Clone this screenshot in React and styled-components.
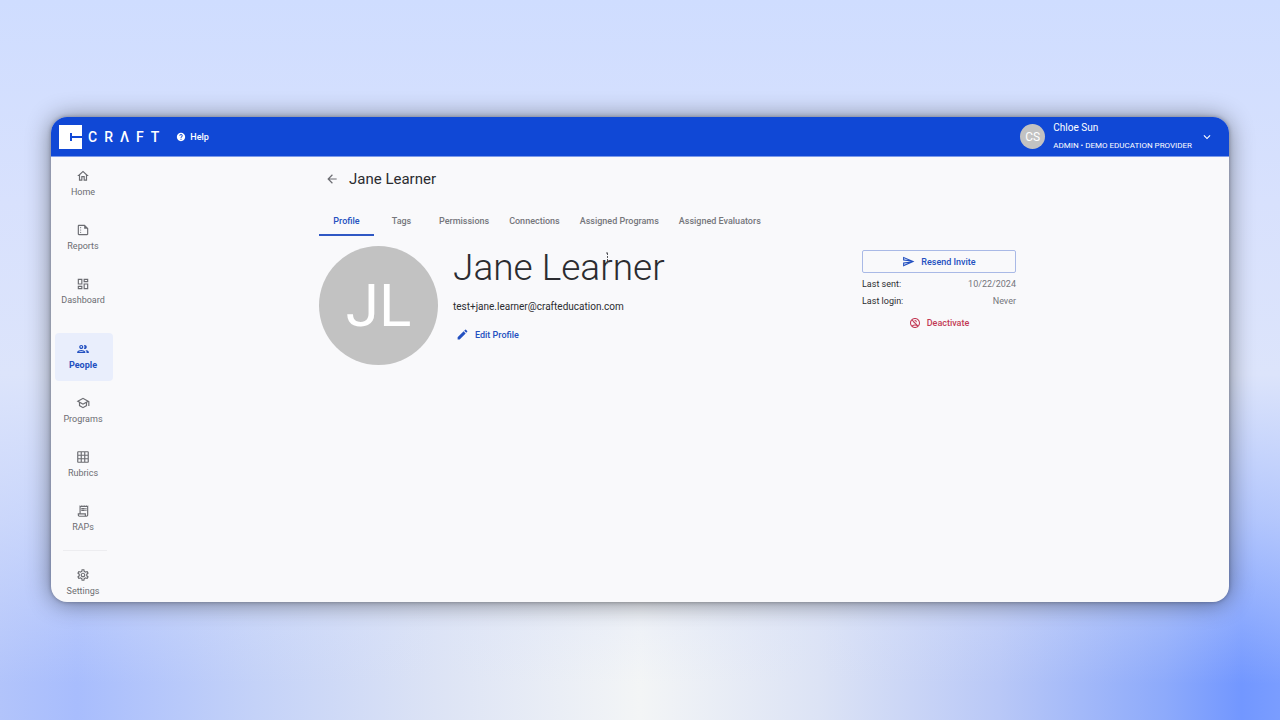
import React, {useState} from "react";
import styled, {createGlobalStyle} from "styled-components";
import {
    MdArrowBack, MdEdit, MdExpandMore, MdHelp, MdOutlineDashboard, MdOutlineGridOn,
    MdOutlineHome, MdOutlineNoAccounts, MdOutlinePeople, MdOutlineReceiptLong,
    MdOutlineSchool, MdOutlineSend, MdOutlineSettings, MdOutlineSummarize
} from "react-icons/md";

const GlobalStyle = createGlobalStyle`
  * { box-sizing: border-box; }
  body {
    margin: 0;
    font-family: Roboto, "Liberation Sans", sans-serif;
    font-size: 9px;
    line-height: 12px;
    color: #2b2c30;
  }
  button { font: inherit; cursor: pointer; }
`

const Page = styled.div`
  min-height: 100vh;
  padding: 117px 51px 118px;
  background:
    linear-gradient(#cfddff 0%, #d8e1fd 28%, #dce4fb 52%, #dce4fb99 72%, #dce4fb00 95%),
    linear-gradient(90deg, #b2c4fb 0%, #a8bdfd 6%, #c4d2f8 20%, #dce3f5 34%, #f3f5f6 50%,
      #dce3f5 64%, #b9c8f7 78%, #8daafb 91%, #7297ff 97%, #7a9dff 100%);
`

const Card = styled.div`
  display: flex;
  flex-direction: column;
  height: calc(100vh - 235px);
  min-height: 300px;
  overflow: hidden;
  border-radius: 16px;
  background: #f9f9fb;
  box-shadow: 0 1px 24px #00000073, 0 0 4px #0000004d;
`

const Header = styled.header`
  display: flex;
  align-items: center;
  flex: none;
  height: 40px;
  padding: 0 15px 0 8px;
  background: #1048d6;
  border-bottom: 1px solid #7c9bea;
  color: #fff;
`

const Brand = styled.a`
  display: flex;
  align-items: center;
  gap: 6px;
  color: #fff;
  text-decoration: none;
`

const Wordmark = styled.span`
  display: flex;
  gap: 7px;
  font-size: 14px;
  font-weight: 500;
  line-height: 24px;
`

const HelpLink = styled.a`
  display: flex;
  align-items: center;
  gap: 4px;
  margin-left: 17px;
  color: #fff;
  font-weight: 500;
  text-decoration: none;
`

const UserMenu = styled.button`
  display: flex;
  align-items: center;
  gap: 8px;
  margin-left: auto;
  padding: 0;
  border: 0;
  background: none;
  color: #fff;
  text-align: left;
`

const Avatar = styled.span`
  display: flex;
  align-items: center;
  justify-content: center;
  flex: none;
  width: ${props => props.$size}px;
  height: ${props => props.$size}px;
  border-radius: 50%;
  background: #c2c2c2;
  color: #fff;
  font-size: ${props => props.$font}px;
  line-height: 1;
`

const UserText = styled.span`
  display: flex;
  flex-direction: column;
  gap: 6px;
`

const UserName = styled.span`
  font-size: 10px;
`

const UserRole = styled.span`
  font-size: 8px;
`

const Body = styled.div`
  display: flex;
  flex: 1;
  min-height: 0;
`

const Sidebar = styled.nav`
  display: flex;
  flex-direction: column;
  gap: 6px;
  flex: none;
  width: 64px;
  padding: 3px 2px 0 4px;
  overflow: hidden;
`

const NavItem = styled.a`
  display: flex;
  flex-direction: column;
  align-items: center;
  gap: 3px;
  flex: none;
  height: 48px;
  margin-top: ${props => props.$active ? 11 : 0}px;
  padding: 9px 2px 0 0;
  border-radius: 4px;
  background: ${props => props.$active ? '#e9eefc' : 'transparent'};
  color: ${props => props.$active ? '#2350c0' : '#6c6d72'};
  font-weight: ${props => props.$active ? 700 : 400};
  text-decoration: none;
`

const Divider = styled.hr`
  flex: none;
  width: 44px;
  height: 1px;
  margin: 1px 8px 2px;
  border: 0;
  background: #ededf0;
`

const Main = styled.main`
  flex: 1;
  padding: 12px 9px 0 0;
`

const Content = styled.div`
  max-width: 697px;
  margin: 0 auto;
`

const TitleRow = styled.div`
  display: flex;
  align-items: center;
  gap: 10px;
  padding-left: 6px;
`

const BackButton = styled.button`
  display: flex;
  padding: 0;
  border: 0;
  background: none;
  color: #6c6d72;
`

const Title = styled.h2`
  margin: 0;
  font-size: 15px;
  font-weight: 400;
  line-height: 20px;
`

const Tabs = styled.div`
  display: flex;
  margin-top: 18px;
`

const Tab = styled.button`
  min-width: 55px;
  height: 29px;
  padding: 0 10px;
  border: 0;
  border-bottom: 2px solid ${props => props.$active ? '#2f58c4' : 'transparent'};
  background: none;
  color: ${props => props.$active ? '#2350c0' : '#75767b'};
  font-weight: 500;
  white-space: nowrap;
`

const Profile = styled.section`
  display: flex;
  align-items: flex-start;
  gap: 15px;
  margin-top: 10px;
`

const Info = styled.div`
  display: flex;
  flex-direction: column;
  align-items: flex-start;
  flex: 1;
`

const Name = styled.h1`
  position: relative;
  margin: 0;
  font-size: 37px;
  font-weight: 300;
  line-height: 44px;
`

const Cursor = styled.svg`
  position: absolute;
  top: 6px;
  left: 152px;
`

const Email = styled.p`
  margin: 11px 0 0;
  font-size: 10px;
`

const TextButton = styled.button`
  display: flex;
  align-items: center;
  gap: 6px;
  padding: 4px 3px;
  border: 0;
  background: none;
  color: ${props => props.$danger ? '#c33a56' : '#2350c0'};
  font-weight: 500;
`

const EditButton = styled(TextButton)`
  margin-top: 11px;
`

const Invite = styled.aside`
  width: 154px;
  padding-top: 4px;
`

const ResendButton = styled(TextButton)`
  justify-content: center;
  width: 100%;
  height: 23px;
  border: 1px solid #a9b9e6;
  border-radius: 2px;
`

const Facts = styled.dl`
  display: grid;
  grid-template-columns: 1fr auto;
  row-gap: 5px;
  margin: 5px 0 6px;
`

const FactValue = styled.dd`
  margin: 0;
  color: #75767b;
  text-align: right;
`

const Deactivate = styled(TextButton)`
  margin: 0 auto;
`

const navItems = [
    {label: 'Home', Icon: MdOutlineHome},
    {label: 'Reports', Icon: MdOutlineSummarize},
    {label: 'Dashboard', Icon: MdOutlineDashboard},
    {label: 'People', Icon: MdOutlinePeople},
    {label: 'Programs', Icon: MdOutlineSchool},
    {label: 'Rubrics', Icon: MdOutlineGridOn},
    {label: 'RAPs', Icon: MdOutlineReceiptLong},
]

const tabs = ['Profile', 'Tags', 'Permissions', 'Connections', 'Assigned Programs', 'Assigned Evaluators']

function Logo() {
    return (
        <svg width="23" height="24" viewBox="0 0 23 24" aria-hidden="true">
            <path d="M0 0h23v11H13V8h-2v8h2v-3h10v11H0z" fill="#fff"/>
        </svg>
    )
}

function TopBar() {
    return (
        <Header>
            <Brand href="#" aria-label="CRAFT">
                <Logo/>
                <Wordmark>
                    {['C', 'R', 'Λ', 'F', 'T'].map((letter) => <span key={letter}>{letter}</span>)}
                </Wordmark>
            </Brand>
            <HelpLink href="#help"><MdHelp size={10}/>Help</HelpLink>
            <UserMenu>
                <Avatar $size={25} $font={12}>CS</Avatar>
                <UserText>
                    <UserName>Chloe Sun</UserName>
                    <UserRole>ADMIN • DEMO EDUCATION PROVIDER</UserRole>
                </UserText>
                <MdExpandMore size={14}/>
            </UserMenu>
        </Header>
    )
}

function SideNav() {
    return (
        <Sidebar>
            {navItems.map(({label, Icon}) => (
                <NavItem key={label} href={'#' + label} $active={label === 'People'}>
                    <Icon size={14}/>
                    {label}
                </NavItem>
            ))}
            <Divider/>
            <NavItem href="#Settings"><MdOutlineSettings size={14}/>Settings</NavItem>
        </Sidebar>
    )
}

function App() {
    let [tab, setTab] = useState('Profile');

    return (
        <Page>
            <GlobalStyle/>
            <Card>
                <TopBar/>
                <Body>
                    <SideNav/>
                    <Main>
                        <Content>
                            <TitleRow>
                                <BackButton aria-label="Back"><MdArrowBack size={14}/></BackButton>
                                <Title>Jane Learner</Title>
                            </TitleRow>
                            <Tabs role="tablist">
                                {tabs.map((name) => (
                                    <Tab key={name} role="tab" aria-selected={tab === name}
                                         $active={tab === name} onClick={() => setTab(name)}>{name}</Tab>
                                ))}
                            </Tabs>
                            <Profile>
                                <Avatar $size={119} $font={60}>JL</Avatar>
                                <Info>
                                    <Name>
                                        Jane Learner
                                        <Cursor width="5" height="12" viewBox="0 0 5 12" aria-hidden="true">
                                            <path d="M1 1h3M1 11h3M2.5 1v10" stroke="#55565a" strokeWidth="1" strokeDasharray="2 1" fill="none"/>
                                        </Cursor>
                                    </Name>
                                    <Email>test+jane.learner@crafteducation.com</Email>
                                    <EditButton><MdEdit size={13}/>Edit Profile</EditButton>
                                </Info>
                                <Invite>
                                    <ResendButton><MdOutlineSend size={13}/>Resend Invite</ResendButton>
                                    <Facts>
                                        <dt>Last sent:</dt>
                                        <FactValue>10/22/2024</FactValue>
                                        <dt>Last login:</dt>
                                        <FactValue>Never</FactValue>
                                    </Facts>
                                    <Deactivate $danger><MdOutlineNoAccounts size={12}/>Deactivate</Deactivate>
                                </Invite>
                            </Profile>
                        </Content>
                    </Main>
                </Body>
            </Card>
        </Page>
    )
}

export default App;
